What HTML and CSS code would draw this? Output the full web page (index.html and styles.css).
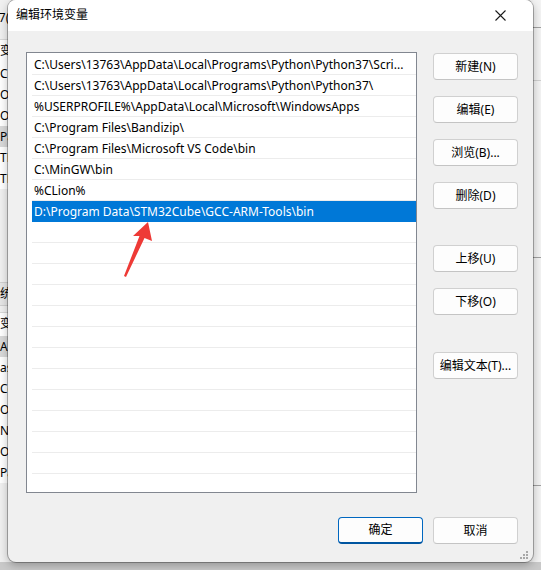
FILE: index.html
```html
<!DOCTYPE html>
<html lang="zh-CN">
<head>
<meta charset="utf-8">
<title>编辑环境变量</title>
<link rel="stylesheet" href="styles.css">
</head>
<body>
<div class="desktop">
  <div class="bgwin">
    <div class="bg-left">
      <div class="bg-title">用户变量 137(</div>
      <div class="bg-list">
        <div class="bg-row bg-head">变量</div>
        <div class="bg-row">CLion</div>
        <div class="bg-row">OneDrive</div>
        <div class="bg-row">OneDriveConsumer</div>
        <div class="bg-row bg-sel">Path</div>
        <div class="bg-row">TEMP</div>
        <div class="bg-row">TMP</div>
      </div>
      <div class="bg-title2">系统变量(S)</div>
      <div class="bg-list2">
        <div class="bg-row bg-head">变量</div>
        <div class="bg-row bg-sel">ADSK_CLM_WPAD_PROXY_CHECK</div>
        <div class="bg-row">asl.log</div>
        <div class="bg-row">ComSpec</div>
        <div class="bg-row">OnlineServices</div>
        <div class="bg-row">NUMBER_OF_PROCESSORS</div>
        <div class="bg-row">OS</div>
        <div class="bg-row">Path</div>
      </div>
    </div>
    <div class="bg-right">
      <div class="bg-r-line l1"></div>
      <div class="bg-r-line l2"></div>
      <div class="bg-r-line l3"></div>
      <div class="bg-r-line l4"></div>
    </div>
  </div>

  <div class="dialog">
    <div class="titlebar">
      <span class="title">编辑环境变量</span>
      <svg class="close" width="11" height="11" viewBox="0 0 11 11"><path d="M0.5 0.5 L10.5 10.5 M10.5 0.5 L0.5 10.5" stroke="#1a1a1a" stroke-width="1.1" fill="none"/></svg>
    </div>
    <div class="body">
      <div class="main">
        <div class="list">
          <div class="row">C:\Users\13763\AppData\Local\Programs\Python\Python37\Scri...</div>
          <div class="row">C:\Users\13763\AppData\Local\Programs\Python\Python37\</div>
          <div class="row">%USERPROFILE%\AppData\Local\Microsoft\WindowsApps</div>
          <div class="row">C:\Program Files\Bandizip\</div>
          <div class="row">C:\Program Files\Microsoft VS Code\bin</div>
          <div class="row">C:\MinGW\bin</div>
          <div class="row">%CLion%</div>
          <div class="row selected">D:\Program Data\STM32Cube\GCC-ARM-Tools\bin</div>
          <div class="row"></div><div class="row"></div><div class="row"></div>
          <div class="row"></div><div class="row"></div><div class="row"></div>
          <div class="row"></div><div class="row"></div><div class="row"></div>
          <div class="row"></div><div class="row"></div><div class="row"></div>
          <div class="row"></div>
        </div>
        <div class="side">
          <button class="btn">新建(N)</button>
          <button class="btn">编辑(E)</button>
          <button class="btn">浏览(B)...</button>
          <button class="btn">删除(D)</button>
          <button class="btn gap1">上移(U)</button>
          <button class="btn">下移(O)</button>
          <button class="btn gap2">编辑文本(T)...</button>
        </div>
      </div>
      <div class="footer">
        <button class="btn primary">确定</button>
        <button class="btn">取消</button>
      </div>
      <svg class="grip" width="10" height="10" viewBox="0 0 10 10">
        <rect x="7" y="1" width="2" height="2" fill="#a8a8a8"/>
        <rect x="4" y="4" width="2" height="2" fill="#a8a8a8"/>
        <rect x="7" y="4" width="2" height="2" fill="#a8a8a8"/>
        <rect x="1" y="7" width="2" height="2" fill="#a8a8a8"/>
        <rect x="4" y="7" width="2" height="2" fill="#a8a8a8"/>
        <rect x="7" y="7" width="2" height="2" fill="#a8a8a8"/>
      </svg>
    </div>
  </div>

  <svg class="arrow" width="541" height="570" viewBox="0 0 541 570">
    <polygon points="148,222 152,241 144.5,238 126,277 124,276 139.5,236 133,236" fill="#ee3a36"/>
  </svg>
</div>
</body>
</html>
```

FILE: styles.css
```css
* { box-sizing: border-box; }
html, body { margin: 0; padding: 0; }
body {
  width: 541px;
  height: 570px;
  overflow: hidden;
  font-family: "Noto Sans", "Noto Sans CJK SC", sans-serif;
  font-size: 12px;
  color: #000;
  background: #c9c9c9;
}
.desktop {
  position: relative;
  width: 541px;
  height: 570px;
  overflow: hidden;
}

/* background window */
.bgwin {
  position: absolute;
  left: 0; top: 0;
  width: 541px; height: 562px;
  background: #f0f0f0;
}
.bg-left {
  position: absolute;
  left: 0; top: 0;
  width: 8px; height: 562px;
  overflow: hidden;
}
.bg-title {
  position: absolute;
  left: -66px; top: 8px;
  white-space: nowrap;
  font-size: 12px;
}
.bg-list, .bg-list2 {
  position: absolute;
  left: 0; width: 200px;
  background: #fff;
  border-top: 1px solid #d8d8d8;
}
.bg-list { top: 39px; }
.bg-list2 { top: 312px; }
.bg-title2 {
  position: absolute;
  left: -12px; top: 282px;
  width: 200px;
  height: 24px;
  line-height: 22px;
  background: #e6e6e6;
  border-top: 1px solid #d0d0d0;
  border-bottom: 1px solid #d0d0d0;
  white-space: nowrap;
}
.bg-row {
  height: 21px;
  line-height: 21px;
  white-space: nowrap;
}
.bg-head { height: 23px; }
.bg-sel { background: #d9d9d9; }
.bg-right {
  position: absolute;
  left: 533px; top: 0;
  width: 8px; height: 562px;
  background: #f3f3f3;
}
.bg-r-line { position: absolute; left: 0; width: 8px; height: 1px; background: #a0a0a0; }
.l1 { top: 27px; }
.l2 { top: 80px; background: #d0d0d0; }
.l3 { top: 257px; }
.l4 { top: 485px; }

/* dialog */
.dialog {
  position: absolute;
  left: 8px; top: 0;
  width: 525px;
  height: 562px;
  border-radius: 8px;
  background: #f0f0f0;
  box-shadow: 0 0 0 1px rgba(0,0,0,0.28), 0 3px 10px rgba(0,0,0,0.28);
  overflow: hidden;
  display: flex;
  flex-direction: column;
}
.titlebar {
  height: 31px;
  background: #fff;
  display: flex;
  align-items: center;
  justify-content: space-between;
  padding: 0 27px 0 8px;
  flex: none;
}
.title { font-size: 12px; line-height: 14px; margin-top: -1px; }
.close { display: block; margin-top: -1px; }

.body {
  position: relative;
  flex: 1;
  padding: 21px 15px 0 18px;
  display: flex;
  flex-direction: column;
}
.main {
  display: flex;
  gap: 16px;
}
.list {
  width: 391px;
  height: 441px;
  background: #fff;
  border: 1px solid #828790;
  padding: 1px 0 0 5px;
  overflow: hidden;
}
.row {
  height: 21px;
  line-height: 18px;
  padding: 2px 0 0 2px;
  border-bottom: 1px solid #ececec;
  white-space: nowrap;
  overflow: hidden;
}
.row.selected {
  background: #0078d7;
  color: #fff;
  border-bottom-color: #0078d7;
}

.side {
  display: flex;
  flex-direction: column;
  gap: 16px;
  padding-top: 1px;
}
.btn {
  width: 85px;
  height: 27px;
  border: 1px solid #d0d0d0;
  border-bottom-color: #c4c4c4;
  border-radius: 4px;
  background: #fdfdfd;
  font-family: "Noto Sans", "Noto Sans CJK SC", sans-serif;
  font-size: 12px;
  color: #000;
  padding: 0;
  line-height: 25px;
  text-align: center;
}
.side .gap1 { margin-top: 20px; }
.side .gap2 { margin-top: 21px; }

.footer {
  display: flex;
  justify-content: flex-end;
  gap: 10px;
  margin-top: 24px;
}
.btn.primary {
  border: 1px solid #0067c0;
  border-bottom: 2px solid #0055a0;
  line-height: 24px;
}
.grip {
  position: absolute;
  right: 4px;
  bottom: 2px;
}
.arrow {
  position: absolute;
  left: 0; top: 0;
  pointer-events: none;
}
```
